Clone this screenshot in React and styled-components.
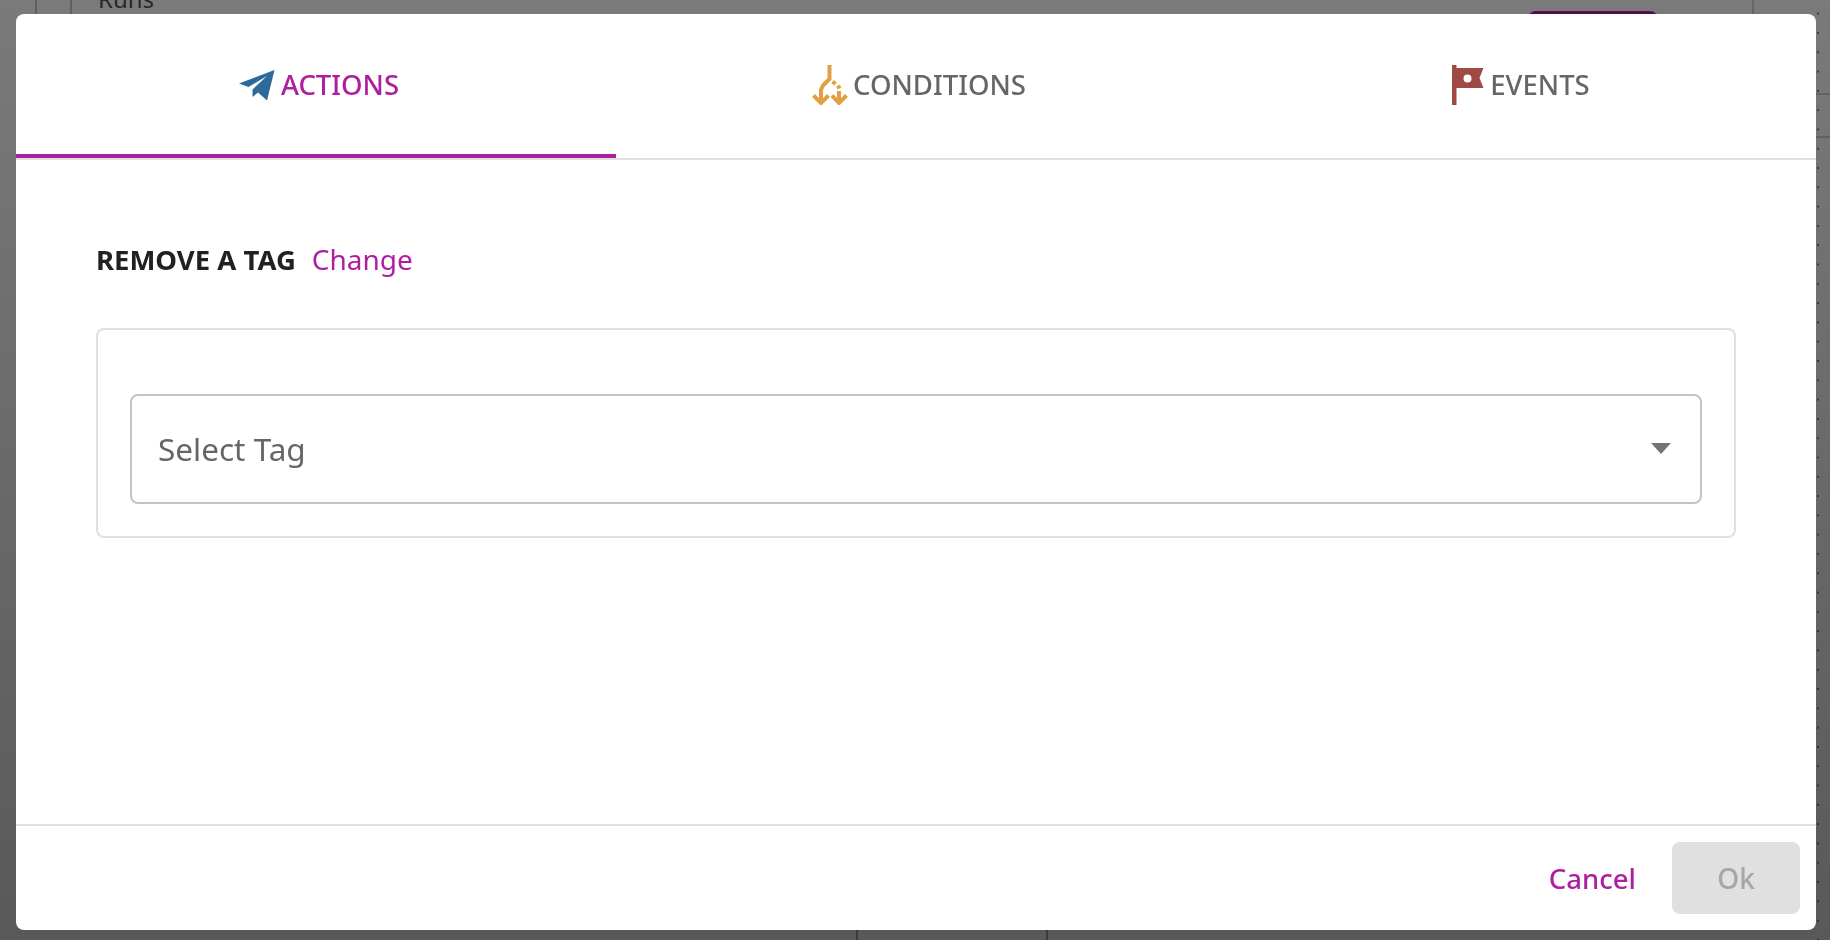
import React from 'react';
import styled, { createGlobalStyle } from 'styled-components';

const GlobalStyle = createGlobalStyle`
	html, body {
		margin: 0;
		padding: 0;
		height: 100%;
		overflow: hidden;
		font-family: 'Noto Sans', 'Open Sans', sans-serif;
	}
`;

const PURPLE = '#ae1fa0';

/* page behind the dialog, only slivers of it show round the edges */
const Behind = styled.div`
	height: 100vh;
	display: flex;
	flex-direction: column;
	background: #fff radial-gradient(circle, #888 0.7px, transparent 1.1px) 1816px 4px / 4px 19.3px repeat-y;
`;

const TopRow = styled.div`
	height: 95px;
	display: flex;
	flex: none;
`;

const Rail = styled.div`
	width: ${(p) => p.$width}px;
	flex: none;
	box-sizing: border-box;
	border-right: 2px solid #c4c4c4;
`;

const PageTitle = styled.div`
	width: 1456px;
	flex: none;
	box-sizing: border-box;
	padding-left: 26px;
	margin-top: -17px;
	font-size: 24px;
	line-height: 32px;
	color: #555;
`;

const NewButton = styled.div`
	width: 130px;
	height: 40px;
	margin-top: 11px;
	border-radius: 8px;
	background: #ae1fa0;
`;

const RightCell = styled.div`
	width: 78px;
	margin-left: auto;
	flex: none;
	box-sizing: border-box;
	border-left: 2px solid #d4d4d4;
	border-bottom: 2px solid #d4d4d4;
`;

const RowLine = styled.div`
	width: 78px;
	height: 43px;
	margin-left: auto;
	flex: none;
	box-sizing: border-box;
	border-bottom: 2px solid #d4d4d4;
`;

const Spacer = styled.div`
	flex: 1;
`;

const BottomRow = styled.div`
	height: 10px;
	flex: none;
	display: flex;
	justify-content: flex-start;
`;

const BottomCell = styled.div`
	width: ${(p) => p.$width}px;
	flex: none;
	box-sizing: border-box;
	border-right: 2px solid #aaa;
`;

const DotStrip = styled.div`
	height: 3px;
	flex: none;
	margin: 0 14px 7px 47px;
	background: radial-gradient(circle, #888 0.7px, transparent 1.1px) 0 0 / 19.3px 3px repeat-x;
`;

const Overlay = styled.div`
	position: fixed;
	inset: 0;
	display: flex;
	align-items: flex-start;
	justify-content: flex-start;
	padding: 14px 0 0 16px;
	box-sizing: border-box;
	background: linear-gradient(180deg, rgba(0, 0, 0, 0.52), rgba(0, 0, 0, 0.65));
`;

const Dialog = styled.div`
	width: 1800px;
	height: 916px;
	flex: none;
	display: flex;
	flex-direction: column;
	background: #fff;
	border-radius: 8px;
	overflow: hidden;
`;

const Tabs = styled.div`
	display: grid;
	grid-template-columns: repeat(3, 600px);
	height: 146px;
	flex: none;
	box-sizing: border-box;
	border-bottom: 2px solid #e0e0e0;
`;

const Tab = styled.div`
	display: flex;
	align-items: center;
	justify-content: center;
	gap: ${(p) => p.$gap}px;
	height: 144px;
	padding: 2px 0 0 ${(p) => p.$offset}px;
	box-sizing: border-box;
	border-bottom: 4px solid ${(p) => (p.$active ? PURPLE : 'transparent')};
	font-size: 27.5px;
	font-weight: 500;
	line-height: 36px;
	color: ${(p) => (p.$active ? PURPLE : '#666')};

	svg {
		flex: none;
	}
`;

const Body = styled.div`
	flex: 1;
	padding: 79px 80px 0 80px;
`;

const Heading = styled.div`
	display: flex;
	align-items: center;
	gap: 16px;
	height: 40px;
	font-size: 28px;
`;

const HeadingTitle = styled.span`
	font-size: 27.5px;
	font-weight: 700;
	color: #212121;
`;

const ChangeLink = styled.a`
	color: ${PURPLE};
	cursor: pointer;
`;

const Panel = styled.div`
	margin-top: 49px;
	height: 210px;
	padding: 64px 32px 32px;
	box-sizing: border-box;
	border: 2px solid #e0e0e0;
	border-radius: 8px;
`;

const SelectBox = styled.div`
	display: flex;
	align-items: center;
	justify-content: space-between;
	height: 110px;
	padding: 0 29px 2px 26px;
	box-sizing: border-box;
	border: 2px solid #c4c4c4;
	border-radius: 8px;
	font-size: 31.5px;
	color: #666;
`;

const Caret = styled.span`
	width: 0;
	height: 0;
	border-left: 10.5px solid transparent;
	border-right: 10.5px solid transparent;
	border-top: 11px solid #757575;
`;

const Footer = styled.div`
	height: 106px;
	flex: none;
	display: flex;
	align-items: flex-start;
	justify-content: flex-end;
	gap: 36px;
	padding: 16px 16px 0 0;
	box-sizing: border-box;
	border-top: 2px solid #e0e0e0;
`;

const CancelButton = styled.button`
	height: 72px;
	padding: 0;
	border: none;
	background: none;
	font: 500 27.5px 'Noto Sans', sans-serif;
	color: ${PURPLE};
`;

const OkButton = styled.button`
	width: 128px;
	height: 72px;
	border: none;
	border-radius: 8px;
	background: #e0e0e0;
	font: 500 28px 'Noto Sans', sans-serif;
	color: #a6a6a6;
`;

const PlaneIcon = () => (
	<svg width="36" height="31" viewBox="0 0 36 31">
		<path fill="#2d6a9c" d="M35.5 0 0 13.5l9.5 3.5L28 6 13.5 19.5 13.5 27l5.5-4.5 9 8z" />
	</svg>
);

const SplitIcon = () => (
	<svg width="36" height="40" viewBox="0 0 36 40" fill="none" stroke="#e0a044" strokeWidth="4">
		<path d="M17.5 0v14L11 20.5 9 25v12" />
		<path d="M1.5 30.5 9 38l7.5-7.5" />
		<path d="M27 26v11M20 30.5 27 38l7.5-7.5" />
		<path d="M20.5 16.5l3 2.5M26 20.5l1.5 3" />
	</svg>
);

const FlagIcon = () => (
	<svg width="32" height="40" viewBox="0 0 32 40">
		<path fill="#a04a46" fillRule="evenodd" d="M0 0h4.5v3H31.5l-4 10 4 10H4.5v17H0zM15.5 9.5a4 4 0 1 0 0 8 4 4 0 0 0 0-8z" />
	</svg>
);

const App = () => (
	<>
		<GlobalStyle />
		<Behind>
			<TopRow>
				<Rail $width={37} />
				<Rail $width={35} />
				<PageTitle>Runs</PageTitle>
				<NewButton />
				<RightCell />
			</TopRow>
			<RowLine />
			<Spacer />
			<DotStrip />
			<BottomRow>
				<BottomCell $width={858} />
				<BottomCell $width={190} />
			</BottomRow>
		</Behind>
		<Overlay>
			<Dialog>
				<Tabs>
					<Tab $active $gap={6} $offset={6}>
						<PlaneIcon />
						ACTIONS
					</Tab>
					<Tab $gap={5} $offset={6}>
						<SplitIcon />
						CONDITIONS
					</Tab>
					<Tab $gap={6} $offset={10}>
						<FlagIcon />
						EVENTS
					</Tab>
				</Tabs>
				<Body>
					<Heading>
						<HeadingTitle>REMOVE A TAG</HeadingTitle>
						<ChangeLink>Change</ChangeLink>
					</Heading>
					<Panel>
						<SelectBox>
							Select Tag
							<Caret />
						</SelectBox>
					</Panel>
				</Body>
				<Footer>
					<CancelButton>Cancel</CancelButton>
					<OkButton disabled>Ok</OkButton>
				</Footer>
			</Dialog>
		</Overlay>
	</>
);

export default App;
